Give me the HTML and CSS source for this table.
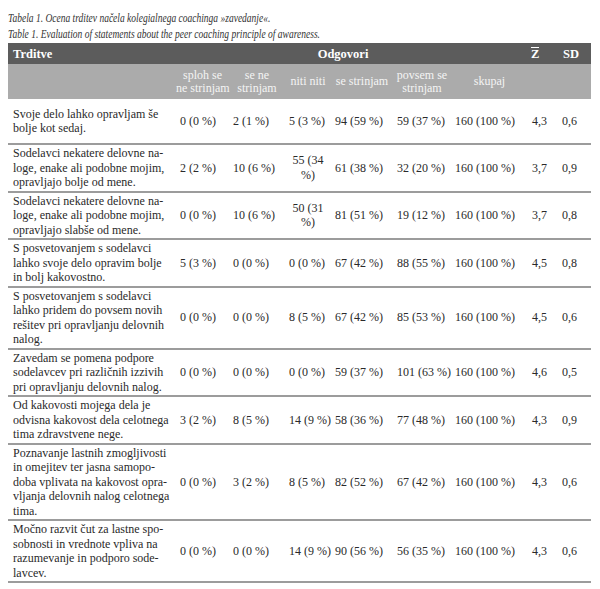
FILE: index.html
```html
<!DOCTYPE html>
<html lang="sl">
<head>
<meta charset="utf-8">
<title>Tabela 1</title>
<link rel="stylesheet" href="styles.css">
</head>
<body>
<div class="caption">
  <p>Tabela 1. Ocena trditev načela kolegialnega coachinga »zavedanje«.</p>
  <p>Table 1. Evaluation of statements about the peer coaching principle of awareness.</p>
</div>
<table class="tbl">
  <colgroup>
    <col class="c0"><col class="c1"><col class="c2"><col class="c3"><col class="c4"><col class="c5"><col class="c6"><col class="c7"><col class="c8">
  </colgroup>
  <thead>
    <tr class="h1">
      <th class="left">Trditve</th>
      <th colspan="6" class="odg">Odgovori</th>
      <th class="mean-h"><span class="mean">Z</span></th>
      <th class="sd-h">SD</th>
    </tr>
    <tr class="h2">
      <th></th>
      <th>sploh se<br>ne strinjam</th>
      <th>se ne<br>strinjam</th>
      <th>niti niti</th>
      <th>se strinjam</th>
      <th>povsem se<br>strinjam</th>
      <th>skupaj</th>
      <th></th>
      <th></th>
    </tr>
  </thead>
  <tbody>
    <tr class="first">
      <td class="stmt">Svoje delo lahko opravljam še<br>bolje kot sedaj.</td>
      <td>0 (0 %)</td><td>2 (1 %)</td><td>5 (3 %)</td><td>94 (59 %)</td><td>59 (37 %)</td><td>160 (100 %)</td><td>4,3</td><td>0,6</td>
    </tr>
    <tr>
      <td class="stmt">Sodelavci nekatere delovne na-<br>loge, enake ali podobne mojim,<br>opravljajo bolje od mene.</td>
      <td>2 (2 %)</td><td>10 (6 %)</td><td class="wrap">55 (34<br>%)</td><td>61 (38 %)</td><td>32 (20 %)</td><td>160 (100 %)</td><td>3,7</td><td>0,9</td>
    </tr>
    <tr>
      <td class="stmt">Sodelavci nekatere delovne na-<br>loge, enake ali podobne mojim,<br>opravljajo slabše od mene.</td>
      <td>0 (0 %)</td><td>10 (6 %)</td><td class="wrap">50 (31<br>%)</td><td>81 (51 %)</td><td>19 (12 %)</td><td>160 (100 %)</td><td>3,7</td><td>0,8</td>
    </tr>
    <tr>
      <td class="stmt">S posvetovanjem s sodelavci<br>lahko svoje delo opravim bolje<br>in bolj kakovostno.</td>
      <td>5 (3 %)</td><td>0 (0 %)</td><td>0 (0 %)</td><td>67 (42 %)</td><td>88 (55 %)</td><td>160 (100 %)</td><td>4,5</td><td>0,8</td>
    </tr>
    <tr>
      <td class="stmt">S posvetovanjem s sodelavci<br>lahko pridem do povsem novih<br>rešitev pri opravljanju delovnih<br>nalog.</td>
      <td>0 (0 %)</td><td>0 (0 %)</td><td>8 (5 %)</td><td>67 (42 %)</td><td>85 (53 %)</td><td>160 (100 %)</td><td>4,5</td><td>0,6</td>
    </tr>
    <tr>
      <td class="stmt">Zavedam se pomena podpore<br>sodelavcev pri različnih izzivih<br>pri opravljanju delovnih nalog.</td>
      <td>0 (0 %)</td><td>0 (0 %)</td><td>0 (0 %)</td><td>59 (37 %)</td><td>101 (63 %)</td><td>160 (100 %)</td><td>4,6</td><td>0,5</td>
    </tr>
    <tr>
      <td class="stmt">Od kakovosti mojega dela je<br>odvisna kakovost dela celotnega<br>tima zdravstvene nege.</td>
      <td>3 (2 %)</td><td>8 (5 %)</td><td>14 (9 %)</td><td>58 (36 %)</td><td>77 (48 %)</td><td>160 (100 %)</td><td>4,3</td><td>0,9</td>
    </tr>
    <tr>
      <td class="stmt">Poznavanje lastnih zmogljivosti<br>in omejitev ter jasna samopo-<br>doba vplivata na kakovost opra-<br>vljanja delovnih nalog celotnega<br>tima.</td>
      <td>0 (0 %)</td><td>3 (2 %)</td><td>8 (5 %)</td><td>82 (52 %)</td><td>67 (42 %)</td><td>160 (100 %)</td><td>4,3</td><td>0,6</td>
    </tr>
    <tr>
      <td class="stmt">Močno razvit čut za lastne spo-<br>sobnosti in vrednote vpliva na<br>razumevanje in podporo sode-<br>lavcev.</td>
      <td>0 (0 %)</td><td>0 (0 %)</td><td>14 (9 %)</td><td>90 (56 %)</td><td>56 (35 %)</td><td>160 (100 %)</td><td>4,3</td><td>0,6</td>
    </tr>
  </tbody>
</table>
</body>
</html>
```

FILE: styles.css
```css
body {
  margin: 8px;
  padding-top: 2px;
  font-family: "Liberation Serif", "Times New Roman", serif;
  color: #2a2a2a;
  background: #ffffff;
}

.caption {
  margin-bottom: 1px;
}

.caption p {
  margin: 0;
  font-style: italic;
  font-size: 12.5px;
  line-height: 16px;
  color: #333333;
  white-space: nowrap;
  transform: scaleX(0.76);
  transform-origin: left center;
}

.tbl {
  width: 583px;
  border-collapse: collapse;
  table-layout: fixed;
  font-size: 12px;
}

.c0 { width: 168px; }
.c1 { width: 53px; }
.c2 { width: 56px; }
.c3 { width: 46px; }
.c4 { width: 62px; }
.c5 { width: 58px; }
.c6 { width: 77px; }
.c7 { width: 30px; }
.c8 { width: 33px; }

.h1 th {
  background: #5c5c5c;
  color: #ffffff;
  font-weight: bold;
  font-size: 12.5px;
  height: 21px;
  padding: 0;
  line-height: 14px;
  text-align: center;
}

.h1 th.left {
  text-align: left;
  padding-left: 5px;
}

.h1 th.odg {
  padding-right: 18px;
}

.h1 th.mean-h {
  text-align: left;
  padding-left: 3px;
}

.h1 th.sd-h {
  text-align: left;
  padding-left: 5px;
}

.mean {
  display: inline-block;
  border-top: 1.5px solid #ffffff;
  line-height: 11px;
  padding-top: 1px;
}

.h2 th {
  background: #ababab;
  color: #f4f4f4;
  font-weight: normal;
  height: 35px;
  padding: 0;
  line-height: 13px;
  text-align: center;
  vertical-align: middle;
  white-space: nowrap;
}

.tbl tbody td {
  border-bottom: 2px solid #9c9c9c;
  line-height: 14.5px;
  padding: 1px 0 1px 4px;
  vertical-align: middle;
  white-space: nowrap;
  color: #2a2a2a;
}

.tbl tbody td.stmt {
  padding-left: 5px;
}

.tbl tbody td.wrap {
  text-align: center;
  padding-left: 0;
}

.tbl tbody tr.first td {
  height: 42px;
}
```
